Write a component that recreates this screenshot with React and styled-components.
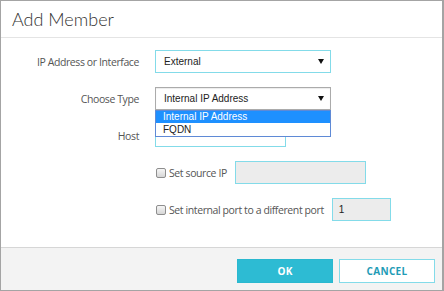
import React from 'react'
import styled, { createGlobalStyle } from 'styled-components'

const Global = createGlobalStyle`
  body {
    margin: 0;
    background: #fff;
  }
`

const Dialog = styled.div`
  width: 444px;
  height: 291px;
  box-sizing: border-box;
  border: 1px solid #a4a4a4;
  border-right-width: 2px;
  display: flex;
  flex-direction: column;
  font-family: "Open Sans", "Liberation Sans", sans-serif;
  background: #fff;
`

const Header = styled.div`
  height: 36px;
  border-bottom: 1px solid #e4e4e4;
  display: flex;
  align-items: center;
  padding-left: 11px;
  font-family: "Lato", "Open Sans", sans-serif;
  font-weight: 300;
  font-size: 18px;
  color: #333;
`

const Body = styled.div`
  flex: 1;
  padding-top: 12px;
  display: flex;
  flex-direction: column;
  gap: 14px;
`

const Row = styled.div`
  display: flex;
  align-items: center;
  gap: 16px;
  height: 23px;
  position: relative;
  z-index: ${p => (p.$raised ? 2 : 'auto')};
`

const Label = styled.div`
  width: 138px;
  text-align: right;
  font-size: 10.5px;
  letter-spacing: -0.4px;
  color: #555;
`

const Select = styled.div`
  width: 176px;
  height: 23px;
  box-sizing: border-box;
  border: 1px solid ${p => (p.$open ? '#ababab' : '#83dbe9')};
  box-shadow: ${p => (p.$open ? 'inset 0 1px 1px rgba(0,0,0,0.08)' : 'none')};
  display: flex;
  align-items: center;
  justify-content: space-between;
  padding: 0 6px 0 8px;
  font-family: "Liberation Sans", Arial, sans-serif;
  font-size: 10px;
  color: #222;
`

const Arrow = styled.span`
  width: 0;
  height: 0;
  border-left: 3px solid transparent;
  border-right: 3px solid transparent;
  border-top: 5px solid #111;
`

const Control = styled.div`
  position: relative;
`

const Menu = styled.div`
  position: absolute;
  left: 0;
  top: 23px;
  width: 176px;
  box-sizing: border-box;
  border: 1px solid #5f8ad6;
  background: #fff;
  font-family: "Liberation Sans", Arial, sans-serif;
  font-size: 10px;
  z-index: 2;
`

const Option = styled.div`
  height: 12px;
  line-height: 12px;
  padding-left: 7px;
  background: ${p => (p.$active ? '#1e90ff' : '#fff')};
  color: ${p => (p.$active ? '#fff' : '#222')};
  & + & {
    margin-top: 1px;
  }
`

const TextBox = styled.div`
  width: ${p => p.$w}px;
  height: 23px;
  box-sizing: border-box;
  border: 1px solid #83dbe9;
  background: ${p => (p.$disabled ? '#ececec' : '#fff')};
  display: flex;
  align-items: center;
  padding-left: 6px;
  font-family: "Liberation Sans", Arial, sans-serif;
  font-size: 10px;
  color: #222;
`

const CheckRow = styled.div`
  display: flex;
  align-items: center;
  height: 23px;
  margin-left: 155px;
`

const Box = styled.span`
  width: 10px;
  height: 10px;
  box-sizing: border-box;
  border: 1px solid #8e8e8e;
  border-radius: 2px;
  background: linear-gradient(#f6f6f6, #d6d6d6);
  margin-right: 3px;
`

const CheckText = styled.span`
  font-size: 10.5px;
  letter-spacing: -0.4px;
  color: #555;
  margin-right: 8px;
`

const Footer = styled.div`
  height: 43px;
  box-sizing: border-box;
  border-top: 1px solid #d6d6d6;
  background: #f3f3f3;
  display: flex;
  align-items: flex-start;
  justify-content: flex-end;
  gap: 6px;
  padding: 11px 7px 0 0;
`

const Button = styled.button`
  width: 96px;
  height: 24px;
  box-sizing: border-box;
  border: 1px solid ${p => (p.$primary ? '#2ab8cf' : '#83dbe9')};
  background: ${p => (p.$primary ? '#2dbbd3' : '#fff')};
  color: ${p => (p.$primary ? '#fff' : '#1f9cb6')};
  font-family: "Open Sans", "Liberation Sans", sans-serif;
  font-weight: 700;
  font-size: 10px;
  letter-spacing: 0.3px;
  padding: 0;
`

export default function App() {
  return (
    <>
      <Global />
      <Dialog>
        <Header>Add Member</Header>
        <Body>
          <Row>
            <Label>IP Address or Interface</Label>
            <Select>
              External
              <Arrow />
            </Select>
          </Row>
          <Row $raised>
            <Label>Choose Type</Label>
            <Control>
              <Select $open>
                Internal IP Address
                <Arrow />
              </Select>
              <Menu>
                <Option $active>Internal IP Address</Option>
                <Option>FQDN</Option>
              </Menu>
            </Control>
          </Row>
          <Row>
            <Label>Host</Label>
            <TextBox $w={131} />
          </Row>
          <CheckRow>
            <Box />
            <CheckText>Set source IP</CheckText>
            <TextBox $w={131} $disabled />
          </CheckRow>
          <CheckRow>
            <Box />
            <CheckText>Set internal port to a different port</CheckText>
            <TextBox $w={59} $disabled>1</TextBox>
          </CheckRow>
        </Body>
        <Footer>
          <Button $primary>OK</Button>
          <Button>CANCEL</Button>
        </Footer>
      </Dialog>
    </>
  )
}
